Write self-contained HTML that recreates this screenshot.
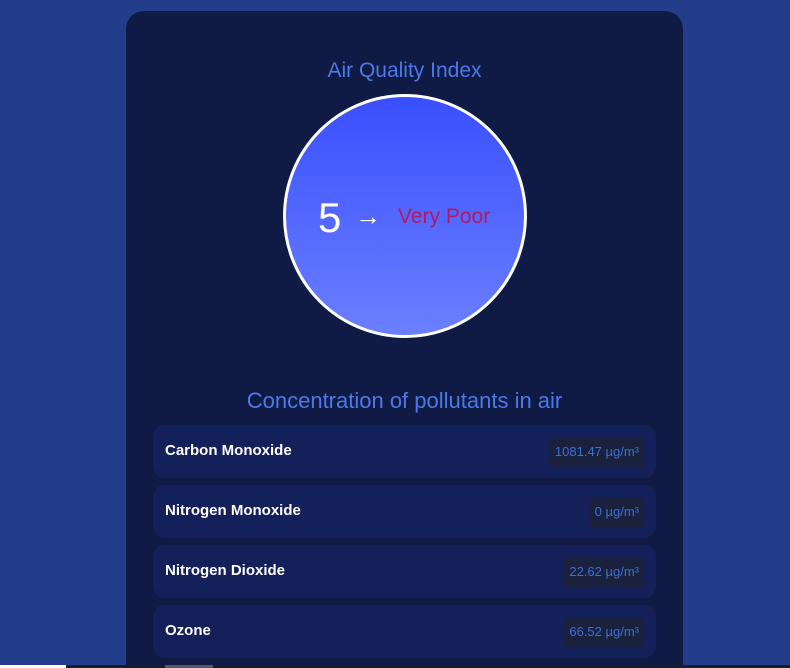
<!DOCTYPE html>
<html><head><meta charset="utf-8"><style>
html,body{margin:0;padding:0;width:790px;height:668px;overflow:hidden;}
body{background:#233d8a;font-family:"Liberation Sans",sans-serif;position:relative;}
.card{position:absolute;left:126px;top:11px;width:557px;height:657px;background:#0f1b45;border-radius:18px 18px 0 0;overflow:hidden;}
.t1{position:absolute;left:0;width:557px;top:48px;text-align:center;color:#4d79e8;font-size:21px;}
.circle{position:absolute;left:157px;top:83px;width:238px;height:238px;border:3px solid #fff;border-radius:50%;background:linear-gradient(#3a4ffd,#6b7fff);}
.five{position:absolute;left:192px;top:183px;color:#fff;font-size:42px;}
.arr{position:absolute;left:229px;top:190px;color:#fff;font-size:26px;}
.vp{position:absolute;left:272px;top:194px;color:#b01a65;font-size:21px;}
.t2{position:absolute;left:0;width:557px;top:377px;text-align:center;color:#4d79e8;font-size:22px;}
.row{position:absolute;left:27px;width:503px;height:53px;background:#13205a;border-radius:12px;}
.row .l{position:absolute;left:12px;top:17px;color:#fff;font-weight:bold;font-size:15px;}
.row .v{position:absolute;right:12px;top:12px;height:30px;line-height:30px;padding:0 5px;background:#19213d;color:#3b6fd8;font-size:13px;border-radius:2px;}
.bot{position:absolute;left:0;top:665px;width:790px;height:3px;background:#1a1d28;}
</style></head><body>
<div class="card">
<div class="t1">Air Quality Index</div>
<div class="circle"></div>
<div class="five">5</div>
<div class="arr">→</div>
<div class="vp">Very Poor</div>
<div class="t2">Concentration of pollutants in air</div>
<div class="row" style="top:414px"><span class="l">Carbon Monoxide</span><span class="v">1081.47 µg/m³</span></div>
<div class="row" style="top:474px"><span class="l">Nitrogen Monoxide</span><span class="v">0 µg/m³</span></div>
<div class="row" style="top:534px"><span class="l">Nitrogen Dioxide</span><span class="v">22.62 µg/m³</span></div>
<div class="row" style="top:594px"><span class="l">Ozone</span><span class="v">66.52 µg/m³</span></div>
</div>
<div class="bot"><div style="position:absolute;left:0;width:66px;height:3px;background:#fff"></div><div style="position:absolute;left:165px;width:48px;height:3px;background:#555a66"></div></div>
</body></html>
